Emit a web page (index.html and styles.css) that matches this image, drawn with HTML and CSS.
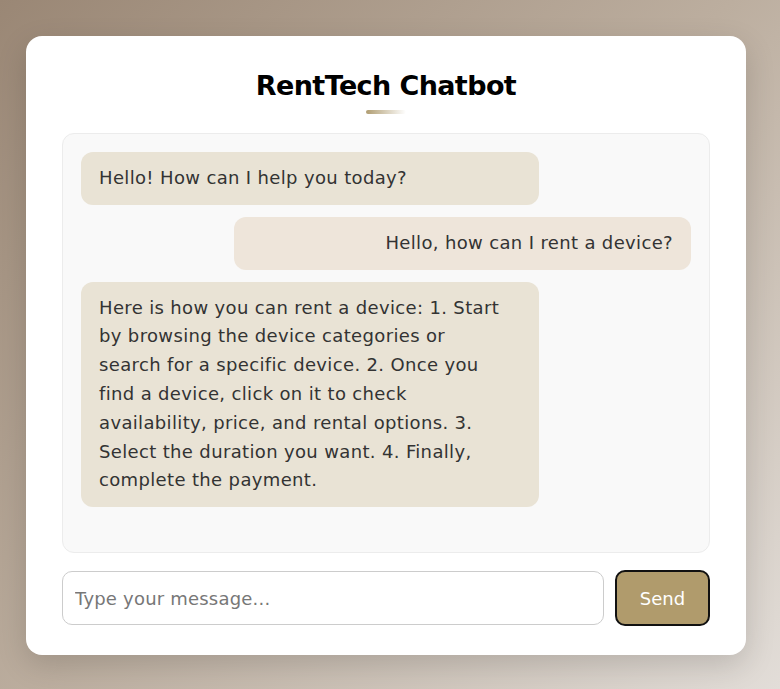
FILE: index.html
```html
<!DOCTYPE html>
<html lang="en">
<head>
<meta charset="utf-8">
<title>RentTech Chatbot</title>
<link rel="stylesheet" href="styles.css">
</head>
<body>
<main class="card">
  <h1 class="title">RentTech Chatbot</h1>
  <div class="underline"></div>
  <section class="chat">
    <div class="msg bot">Hello! How can I help you today?</div>
    <div class="msg user">Hello, how can I rent a device?</div>
    <div class="msg bot">Here is how you can rent a device: 1. Start<br>by browsing the device categories or<br>search for a specific device. 2. Once you<br>find a device, click on it to check<br>availability, price, and rental options. 3.<br>Select the duration you want. 4. Finally,<br>complete the payment.</div>
  </section>
  <form class="composer">
    <input class="input" type="text" placeholder="Type your message...">
    <button class="send" type="button">Send</button>
  </form>
</main>
</body>
</html>
```
FILE: styles.css
```css
* { box-sizing: border-box; }
html, body { height: 100%; }
body {
  margin: 0;
  font-family: "DejaVu Sans", sans-serif;
  background: linear-gradient(135deg, #9a8775 0%, #bcae9f 50%, #e2ddd8 100%);
  padding: 36px 34px 0 26px;
  overflow: hidden;
}
.card {
  width: 720px;
  background: #fff;
  border-radius: 16px;
  box-shadow: 0 10px 30px rgba(0,0,0,0.15);
  padding: 30px 36px 29px;
  display: flex;
  flex-direction: column;
}
.title {
  margin: 0;
  text-align: center;
  font-size: 27px;
  font-weight: bold;
  letter-spacing: -0.6px;
  color: #000;
  line-height: 40px;
}
.underline {
  width: 40px;
  height: 4px;
  border-radius: 2px;
  margin: 4px auto 19px;
  background: linear-gradient(90deg, #b09d72, #ffffff);
}
.chat {
  flex-shrink: 0;
  height: 420px;
  background: #f9f9f9;
  border: 1px solid #ececec;
  border-radius: 12px;
  padding: 18px;
  overflow-y: auto;
  display: flex;
  flex-direction: column;
  gap: 12px;
}
.msg {
  width: 75%;
  padding: 12px 18px;
  border-radius: 12px;
  font-size: 18px;
  line-height: 1.6;
  letter-spacing: 0.35px;
  color: #333;
}
.bot {
  background: #e9e3d5;
  align-self: flex-start;
}
.user {
  background: #eee5da;
  align-self: flex-end;
  text-align: right;
}
.composer {
  margin: 17px 0 0;
  display: flex;
  gap: 11px;
  align-items: center;
}
.input {
  flex: 1;
  height: 54px;
  border: 1px solid #ccc;
  border-radius: 10px;
  padding: 0 12px;
  font-family: "DejaVu Sans", sans-serif;
  font-size: 18px;
  letter-spacing: 0.2px;
  color: #333;
  background: #fff;
  outline: none;
}
.input::placeholder { color: #777; }
.send {
  width: 95px;
  height: 56px;
  border: 2px solid #111;
  border-radius: 10px;
  background: #b09b6c;
  color: #fff;
  font-family: "DejaVu Sans", sans-serif;
  font-size: 18px;
  cursor: pointer;
}
```
